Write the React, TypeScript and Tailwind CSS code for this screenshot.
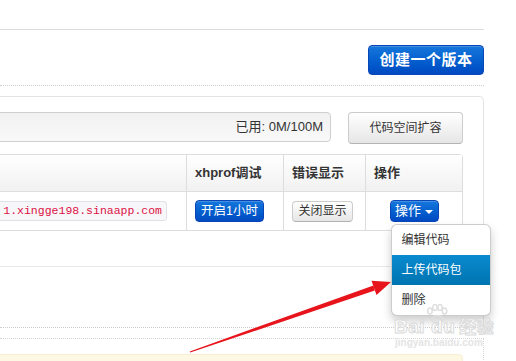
import React from "react";

function PrimaryBtn({ className = "", children }: { className?: string; children: React.ReactNode }) {
  return (
    <button
      className={
        "flex items-center justify-center rounded-[4px] border border-[#0a45b8] bg-linear-to-b from-[#1677dc] to-[#0049c2] text-white shadow-[inset_0_1px_0_rgba(255,255,255,0.2)] " +
        className
      }
    >
      {children}
    </button>
  );
}

function DefaultBtn({ className = "", children }: { className?: string; children: React.ReactNode }) {
  return (
    <button
      className={
        "flex items-center justify-center rounded-[4px] border border-[#cccccc] border-b-[#b3b3b3] bg-linear-to-b from-white to-[#e6e6e6] text-[#333] " +
        className
      }
    >
      {children}
    </button>
  );
}

export default function App() {
  return (
    <div className="relative h-[361px] w-[516px] overflow-hidden bg-white text-[#333] font-['Liberation_Sans','Noto_Sans_CJK_SC',sans-serif]">
      {/* top rule */}
      <div className="h-[30px] w-[484px] border-b border-[#dddddd]" />

      {/* create button row */}
      <div className="flex w-[484px] justify-end border-b border-dotted border-[#cfcfcf] pt-[15px] pb-[10px]">
        <PrimaryBtn className="h-[30px] w-[116px] text-[15px] font-bold tracking-[0.5px]">创建一个版本</PrimaryBtn>
      </div>

      {/* panel */}
      <div className="mt-[10px] w-[484px] rounded-tr-[5px] border-t border-r border-[#e3e3e3] pt-[15px] pr-[20px]">
        <div className="flex items-start gap-[17px]">
          <div className="-ml-[6px] flex h-[30px] flex-1 items-center justify-end rounded-[4px] border border-[#cfcfcf] bg-linear-to-b from-[#f1f1f1] to-[#f9f9f9] pr-[7px] text-[13px] text-[#333]">
            已用: 0M/100M
          </div>
          <DefaultBtn className="h-[32px] w-[115px] text-[12px]">代码空间扩容</DefaultBtn>
        </div>

        {/* table */}
        <div className="mt-[10px] rounded-tr-[4px] border-t border-r border-b border-[#dddddd]">
          <div className="grid h-[37px] grid-cols-[186px_97px_82px_1fr] border-b border-[#dddddd] bg-linear-to-b from-white to-[#f1f1f1] text-[13px] font-bold text-[#333]">
            <div />
            <div className="flex items-center border-l border-[#dddddd] pl-[8px]">xhprof调试</div>
            <div className="flex items-center border-l border-[#dddddd] pl-[8px]">错误显示</div>
            <div className="flex items-center border-l border-[#dddddd] pl-[8px]">操作</div>
          </div>
          <div className="grid h-[38px] grid-cols-[186px_97px_82px_1fr] bg-white">
            <div className="flex items-center">
              <div className="-ml-[8px] flex h-[20px] w-[175px] items-center justify-end rounded-[3px] border border-[#e1e1e8] bg-[#f7f7f9] pr-[4px] font-['Liberation_Mono',monospace] text-[11.5px] text-[#dd1144]">
                1.xingge198.sinaapp.com
              </div>
            </div>
            <div className="flex items-center border-l border-[#dddddd] pl-[8px]">
              <PrimaryBtn className="h-[22px] w-[69px] text-[12.5px]">开启1小时</PrimaryBtn>
            </div>
            <div className="flex items-center border-l border-[#dddddd] pl-[8px]">
              <DefaultBtn className="h-[21px] w-[61px] text-[12px]">关闭显示</DefaultBtn>
            </div>
            <div className="flex items-center justify-center border-l border-[#dddddd]">
              <div className="relative">
                <PrimaryBtn className="h-[22px] w-[49px] gap-[4px] text-[13px]">
                  操作
                  <span className="mt-[1px] inline-block h-0 w-0 border-x-[4px] border-t-[4px] border-x-transparent border-t-white" />
                </PrimaryBtn>
                <div className="absolute left-[1px] top-[24px] z-10 w-[100px] rounded-[6px] border border-[rgba(0,0,0,0.2)] bg-white shadow-[0_5px_10px_rgba(0,0,0,0.2)]">
                  <div className="flex h-[30px] items-center pl-[10px] text-[12px] text-[#333]">编辑代码</div>
                  <div className="flex h-[30px] items-center bg-linear-to-b from-[#0a8ad0] to-[#0074b0] pl-[10px] text-[12px] text-white">
                    上传代码包
                  </div>
                  <div className="flex h-[30px] items-center pl-[10px] text-[12px] text-[#333]">删除</div>
                </div>
              </div>
            </div>
          </div>
        </div>

        <div className="-mr-[20px] mt-[35px] h-px bg-[#e8e8e8]" />
        <div className="h-[60px]" />
      </div>
      <div className="w-[484px] border-b border-dotted border-[#cccccc]" />

      {/* next box */}
      <div className="mt-[10px] w-[484px] border-t border-r border-dotted border-[#d5d5d5] pt-[15px] pr-[20px]">
        <div className="-ml-[6px] h-[30px] rounded-[4px] border border-[#fbeed5] bg-[#fcf8e3]" />
      </div>

      {/* red arrow */}
      <svg className="pointer-events-none absolute left-0 top-0 z-20" width="516" height="361" viewBox="0 0 516 361">
        <polygon points="190.2,352.6 189.8,351.4 373.4,285.4 374.8,290.6" fill="#e8141b" />
        <polygon points="391,282 371.5,280.8 376.5,295" fill="#e8141b" />
      </svg>

      {/* watermark */}
      <div className="pointer-events-none absolute left-[394px] top-[303px] z-30 text-[#e2e2e2]">
        <svg className="absolute left-[32px] top-[1px]" width="22" height="20" viewBox="0 0 22 20">
          <g fill="none" stroke="#dedede" strokeWidth="1.5">
            <ellipse cx="4" cy="7" rx="2.2" ry="3" />
            <ellipse cx="9" cy="3.5" rx="2.2" ry="3" />
            <ellipse cx="14" cy="3.5" rx="2.2" ry="3" />
            <ellipse cx="18.5" cy="7" rx="2.2" ry="3" />
            <path d="M6 16 C 7 10, 16 10, 17 16 C 16 19, 7 19, 6 16 Z" />
          </g>
        </svg>
        <div className="absolute left-0 top-[14px] whitespace-nowrap text-[19px] font-bold leading-none tracking-[0.5px] text-white [-webkit-text-stroke:1px_#dadada]">
          Bai<span className="ml-[6px]">du</span>
          <span className="ml-[4px] font-['Noto_Sans_CJK_SC',sans-serif] text-[17px]">经验</span>
        </div>
        <div className="absolute left-[1px] top-[35px] whitespace-nowrap text-[10px] font-bold leading-none text-[#e4e4e4]">
          jingyan.baidu.com
        </div>
      </div>
    </div>
  );
}
